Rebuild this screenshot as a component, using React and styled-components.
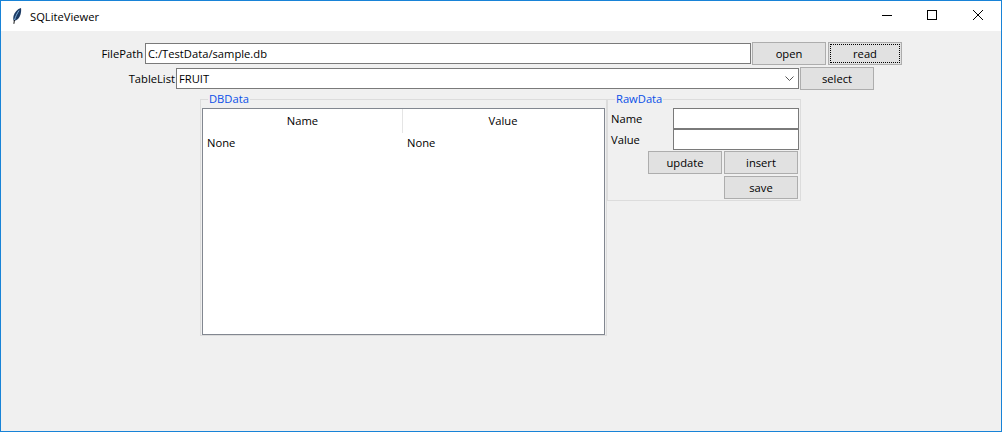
import React from 'react';
import styled, { createGlobalStyle } from 'styled-components';

const GlobalStyle = createGlobalStyle`
  html, body {
    margin: 0;
    padding: 0;
    background: #f0f0f0;
  }
  * {
    box-sizing: border-box;
  }
`;

const Window = styled.div`
  width: 1002px;
  height: 432px;
  display: flex;
  flex-direction: column;
  border: 1px solid #1883d7;
  background: #f0f0f0;
  color: #000;
  font-family: 'Open Sans', 'Noto Sans', sans-serif;
  font-size: 11.2px;
  overflow: hidden;
`;

const TitleBar = styled.div`
  height: 30px;
  display: flex;
  align-items: center;
  background: #fff;
  flex-shrink: 0;
`;

const AppIcon = styled.svg`
  width: 16px;
  height: 16px;
  margin-left: 8px;
`;

const Title = styled.span`
  margin-left: 5px;
  flex: 1;
`;

const WindowButton = styled.div`
  width: 46px;
  height: 30px;
  padding-bottom: 2px;
  display: flex;
  align-items: center;
  justify-content: center;
`;

const Glyph = styled.svg`
  shape-rendering: crispEdges;
  fill: none;
  stroke: #000;
  stroke-width: 1;
`;

const Body = styled.div`
  flex: 1;
  padding-top: 11px;
  display: flex;
  flex-direction: column;
`;

const FormRow = styled.div`
  height: 23px;
  display: flex;
  align-items: center;
  margin-bottom: 2px;
  padding-left: ${(p) => p.$indent}px;
`;

const RowLabel = styled.label`
  width: ${(p) => p.$width}px;
  margin-right: ${(p) => p.$gap}px;
  text-align: right;
  white-space: nowrap;
`;

const Entry = styled.div`
  width: ${(p) => p.$width}px;
  height: 21px;
  display: flex;
  align-items: center;
  justify-content: space-between;
  padding: 0 2px;
  background: #fff;
  border: 1px solid #7a7a7a;
`;

const Chevron = styled.svg`
  width: 9px;
  height: 5px;
  margin-right: 2px;
  fill: none;
  stroke: #555;
  stroke-width: 1;
`;

const Button = styled.button`
  width: 74px;
  height: 23px;
  margin-left: ${(p) => p.$left || 0}px;
  padding: 0;
  font: inherit;
  color: #000;
  background: #e1e1e1;
  border: 1px solid #adadad;
  position: relative;

  ${(p) =>
    p.$focused &&
    `
    &::after {
      content: '';
      position: absolute;
      inset: 1px;
      border: 1px dotted #000;
    }
  `}
`;

const Panels = styled.div`
  display: flex;
  align-items: flex-start;
  padding-left: 199px;
`;

const Frame = styled.fieldset`
  margin: 0;
  padding: 0 1px;
  width: ${(p) => p.$width}px;
  height: ${(p) => p.$height}px;
  border: 1px solid #dcdcdc;
`;

const FrameTitle = styled.legend`
  margin-left: ${(p) => p.$left}px;
  padding: 0 1px;
  line-height: 14px;
  color: #0a4fe8;
`;

const Tree = styled.div`
  width: 403px;
  height: 227px;
  margin-top: 2px;
  background: #fff;
  border: 1px solid #828790;
`;

const TreeHeader = styled.div`
  display: grid;
  grid-template-columns: 200px 200px;
  height: 24px;
`;

const HeaderCell = styled.div`
  display: flex;
  align-items: center;
  justify-content: center;
  padding-bottom: 2px;
  border-right: 1px solid #e5e5e5;

  &:last-child {
    border-right: 0;
  }
`;

const TreeRow = styled.div`
  display: grid;
  grid-template-columns: 200px 200px;
  height: 20px;
  align-items: center;
  padding: 0 0 2px 4px;
`;

const RawGrid = styled.div`
  display: grid;
  grid-template-columns: 62px 126px;
  grid-auto-rows: 21px;
  align-items: center;
  margin-top: 2px;
  padding-left: 2px;
`;

const ActionRow = styled.div`
  display: flex;
  justify-content: flex-end;
  margin-top: ${(p) => p.$top}px;
  padding-right: 1px;
`;

const FeatherIcon = () => (
  <AppIcon viewBox="0 0 16 16">
    <path d="M12 0C8.5 1 5.5 4 4.5 8 4 10.5 4.2 12 5 13c3-.5 5.5-3 6.5-6.5C12.2 4 12.3 2 12 0z" fill="#1c3a63" />
    <path d="M10 2.5C8 5.5 6.3 9 5.6 12" fill="none" stroke="#7fb2e0" strokeWidth="1" />
    <path d="M5.4 12L4.9 15.8" fill="none" stroke="#111" strokeWidth="1" />
  </AppIcon>
);

export default function App() {
  return (
    <Window>
      <GlobalStyle />
      <TitleBar>
        <FeatherIcon />
        <Title>SQLiteViewer</Title>
        <WindowButton>
          <Glyph width="12" height="10" viewBox="0 0 12 10">
            <path d="M2 5.5H12" />
          </Glyph>
        </WindowButton>
        <WindowButton>
          <Glyph width="10" height="10" viewBox="0 0 10 10">
            <rect x="0.5" y="0.5" width="9" height="9" />
          </Glyph>
        </WindowButton>
        <WindowButton>
          <svg width="10" height="10" viewBox="0 0 10 10" fill="none" stroke="#000" strokeWidth="1">
            <path d="M0 0L10 10M10 0L0 10" />
          </svg>
        </WindowButton>
      </TitleBar>
      <Body>
        <FormRow $indent={100}>
          <RowLabel $width={42} $gap={2}>FilePath</RowLabel>
          <Entry $width={606}>C:/TestData/sample.db</Entry>
          <Button $left={1}>open</Button>
          <Button $left={2} $focused>
            read
          </Button>
        </FormRow>
        <FormRow $indent={127}>
          <RowLabel $width={47} $gap={1}>TableList</RowLabel>
          <Entry $width={623}>
            FRUIT
            <Chevron viewBox="0 0 9 5">
              <path d="M0.5 0.5L4.5 4.5L8.5 0.5" />
            </Chevron>
          </Entry>
          <Button $left={1}>select</Button>
        </FormRow>
        <Panels>
          <Frame $width={407} $height={244}>
            <FrameTitle $left={6}>DBData</FrameTitle>
            <Tree>
              <TreeHeader>
                <HeaderCell>Name</HeaderCell>
                <HeaderCell>Value</HeaderCell>
              </TreeHeader>
              <TreeRow>
                <span>None</span>
                <span>None</span>
              </TreeRow>
            </Tree>
          </Frame>
          <Frame $width={194} $height={109}>
            <FrameTitle $left={6}>RawData</FrameTitle>
            <RawGrid>
              <span>Name</span>
              <Entry $width={126} />
              <span>Value</span>
              <Entry $width={126} />
            </RawGrid>
            <ActionRow $top={1}>
              <Button>update</Button>
              <Button $left={2}>insert</Button>
            </ActionRow>
            <ActionRow $top={2}>
              <Button>save</Button>
            </ActionRow>
          </Frame>
        </Panels>
      </Body>
    </Window>
  );
}
